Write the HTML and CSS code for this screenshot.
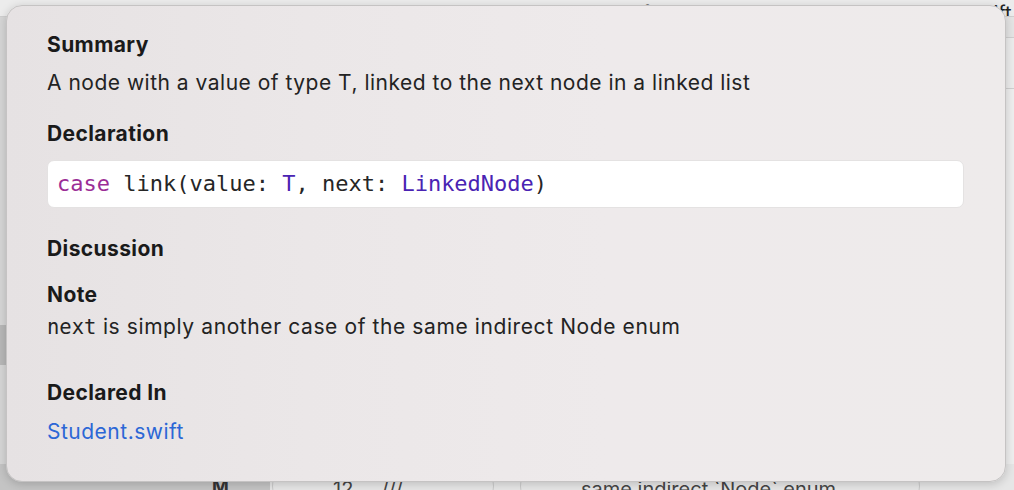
FILE: index.html
```html
<!DOCTYPE html>
<html>
<head>
<meta charset="utf-8">
<link rel="stylesheet" href="styles.css">
</head>
<body>
<div class="backdrop">
  <div class="bg-top">
    <span class="bg-tab t1">Employee.swift</span>
    <span class="bg-tab t2">ADIOsprint.swift</span>
  </div>
  <div class="bg-mid">
    <div class="bg-left"><div class="bg-left-sel"></div></div>
    <div class="bg-right"></div>
  </div>
  <div class="bg-bottom">
    <div class="bg-bl"><span>M</span></div>
    <div class="bg-br">
      <span class="pill p1">12&nbsp;&nbsp;&nbsp;&nbsp;&nbsp;///</span>
      <span class="pill p2">same indirect `Node` enum</span>
    </div>
  </div>
</div>

<div class="popover">
  <h2 class="head">Summary</h2>
  <p class="text">A node with a value of type T, linked to the next node in a linked list</p>
  <h2 class="head decl-head">Declaration</h2>
  <div class="code"><span class="kw">case</span> link(value: <span class="ty">T</span>, next: <span class="ty">LinkedNode</span>)</div>
  <h2 class="head disc-head">Discussion</h2>
  <h2 class="head note-head">Note</h2>
  <p class="text note-text"><span class="mono">next</span> is simply another case of the same indirect Node enum</p>
  <h2 class="head decl-in">Declared In</h2>
  <a class="link">Student.swift</a>
</div>
</body>
</html>
```

FILE: styles.css
```css
html, body {
  margin: 0;
  padding: 0;
  width: 1014px;
  height: 490px;
  overflow: hidden;
  font-family: "Inter", "Liberation Sans", sans-serif;
}

.backdrop {
  width: 1014px;
  height: 490px;
  display: flex;
  flex-direction: column;
  background: #e9e9e9;
}

.bg-top {
  height: 16px;
  background: #ececec;
  border-bottom: 1px solid #cfcfcf;
  position: relative;
  overflow: hidden;
  font-size: 20px;
  color: #222;
}
.bg-tab {
  position: absolute;
  top: 1px;
  white-space: nowrap;
}
.t1 { left: 512px; }
.t2 { left: 858px; }

.bg-mid {
  flex: 1;
  display: flex;
}
.bg-left {
  width: 260px;
  background: #d6d6d6;
  position: relative;
}
.bg-left-sel {
  position: absolute;
  left: 0;
  top: 308px;
  width: 260px;
  height: 40px;
  background: #b8b8b8;
}
.bg-right {
  flex: 1;
  background: linear-gradient(#e4e4e4 0 20px, #cfcfcf 20px 21px, #ececec 21px 71px, #cfcfcf 71px 72px, #eeeeee 72px);
}

.bg-bottom {
  height: 26px;
  display: flex;
}
.bg-bl {
  width: 270px;
  background: #c4c4c4;
  font-size: 18px;
  font-weight: 700;
  color: #333;
  padding-left: 212px;
  box-sizing: border-box;
  line-height: 26px;
  padding-top: 10px;
}
.bg-br {
  flex: 1;
  background: #e6e6e6;
  position: relative;
  overflow: hidden;
}
.pill {
  position: absolute;
  top: 2px;
  height: 40px;
  border: 1px solid #c9c9c9;
  border-radius: 20px;
  font-size: 20px;
  color: #444;
  padding: 10px 60px;
  box-sizing: border-box;
  white-space: nowrap;
}
.p1 { left: 2px; width: 222px; }
.p2 { left: 250px; width: 400px; }

.popover {
  position: absolute;
  left: 6px;
  top: 5px;
  width: 1000px;
  height: 477px;
  box-sizing: border-box;
  border-radius: 16px;
  background: linear-gradient(90deg, #e6e2e3 0%, #ebe7e8 30%, #eeeaeb 60%, #eeebeb 100%);
  border: 1px solid #c5c3c3;
  box-shadow: 0 2px 10px rgba(0,0,0,0.18);
  padding: 27px 41px 0 40px;
  color: #232323;
}

.head {
  margin: 0;
  font-size: 21px;
  font-weight: 700;
  letter-spacing: 0.4px;
  line-height: 24px;
  color: #1a1a1a;
}
.text {
  margin: 14px 0 0;
  font-size: 21px;
  letter-spacing: 0.5px;
  line-height: 24px;
  color: #232323;
}
.decl-head { margin-top: 27px; }
.code {
  margin-top: 14px;
  height: 48px;
  background: #fff;
  border: 1px solid #e4e2e2;
  border-radius: 7px;
  box-sizing: border-box;
  padding-left: 9px;
  line-height: 46px;
  font-family: "DejaVu Sans Mono", "Liberation Mono", monospace;
  font-size: 22px;
  letter-spacing: 0;
  color: #262626;
}
.kw { color: #9b2d96; }
.ty { color: #4a23b3; }
.mono {
  font-family: "DejaVu Sans Mono", "Liberation Mono", monospace;
  font-size: 20.5px;
  letter-spacing: 0;
}
.disc-head { margin-top: 29px; }
.note-head { margin-top: 22px; }
.note-text { margin-top: 8px; letter-spacing: 0.6px; }
.decl-in { margin-top: 42px; }
.link {
  display: block;
  margin-top: 15px;
  font-size: 21px;
  letter-spacing: 0.5px;
  line-height: 24px;
  color: #2c67d6;
}
```
